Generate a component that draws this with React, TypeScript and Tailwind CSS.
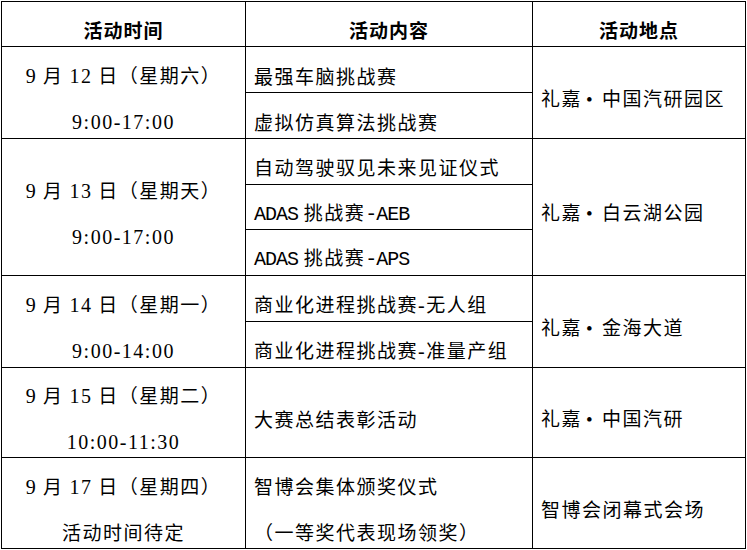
import React from "react";

function Latin({ p }: { p: string }) {
  if (/^[0-9:\-]+$/.test(p)) {
    return (
      <span className="font-['Liberation_Serif'] text-[20px] tracking-[1.5px]">{p}</span>
    );
  }
  return <span className="font-['Liberation_Mono'] text-[20px] tracking-[-1px]">{p}</span>;
}

function Txt({ s }: { s: string }) {
  const parts = s.split(/([!-~]+)/);
  return (
    <>
      {parts.map((p, i) => {
        if (i % 2 === 1) {
          return <Latin key={i} p={p} />;
        }
        const segs = p.split("•");
        return (
          <React.Fragment key={i}>
            {segs.map((seg, j) => (
              <React.Fragment key={j}>
                {j > 0 && (
                  <span className="inline-block w-[20px] pl-[4px] text-left font-['Liberation_Serif'] text-[19px] tracking-[0px]">
                    •
                  </span>
                )}
                {seg}
              </React.Fragment>
            ))}
          </React.Fragment>
        );
      })}
    </>
  );
}

type Row = {
  h: string;
  date: string;
  time: string;
  items: string[];
  multiline?: boolean;
  place: string;
};

const rows: Row[] = [
  {
    h: "h-[92px]",
    date: "9 月 12 日（星期六）",
    time: "9:00-17:00",
    items: ["最强车脑挑战赛", "虚拟仿真算法挑战赛"],
    place: "礼嘉•中国汽研园区",
  },
  {
    h: "h-[137px]",
    date: "9 月 13 日（星期天）",
    time: "9:00-17:00",
    items: ["自动驾驶驭见未来见证仪式", "ADAS 挑战赛-AEB", "ADAS 挑战赛-APS"],
    place: "礼嘉•白云湖公园",
  },
  {
    h: "h-[92px]",
    date: "9 月 14 日（星期一）",
    time: "9:00-14:00",
    items: ["商业化进程挑战赛-无人组", "商业化进程挑战赛-准量产组"],
    place: "礼嘉•金海大道",
  },
  {
    h: "h-[90px]",
    date: "9 月 15 日（星期二）",
    time: "10:00-11:30",
    items: ["大赛总结表彰活动"],
    place: "礼嘉•中国汽研",
  },
  {
    h: "h-[91px]",
    date: "9 月 17 日（星期四）",
    time: "活动时间待定",
    items: ["智博会集体颁奖仪式", "（一等奖代表现场领奖）"],
    multiline: true,
    place: "智博会闭幕式会场",
  },
];

export default function App() {
  return (
    <div className="w-[747px] h-[550px] overflow-hidden bg-white pl-[1px] pt-[1px] font-['Noto_Sans_CJK_SC',sans-serif] text-black">
      <div className="w-[745px] border-l border-t border-black flex flex-col">
        <div className="grid grid-cols-[244px_287px_213px] h-[45px] shrink-0">
          {["活动时间", "活动内容", "活动地点"].map((t) => (
            <div
              key={t}
              className="border-r border-b border-black flex items-center justify-center pt-3 font-bold text-[19px] tracking-[1px] leading-[24px]"
            >
              {t}
            </div>
          ))}
        </div>
        {rows.map((r, idx) => (
          <div
            key={idx}
            className={`grid grid-cols-[244px_287px_213px] grid-rows-[100%] shrink-0 overflow-hidden ${r.h}`}
          >
            <div className="border-r border-b border-black flex flex-col items-center justify-center gap-[21px] pt-3 text-[19px] tracking-[1.5px] leading-[24px]">
              <div>
                <Txt s={r.date} />
              </div>
              <div>
                <Txt s={r.time} />
              </div>
            </div>
            <div className="border-r border-b border-black flex flex-col min-h-0">
              {r.multiline ? (
                <div className="flex-1 flex flex-col justify-center gap-[22px] pl-2 pt-3 text-[19px] tracking-[1.5px] leading-[24px]">
                  {r.items.map((it) => (
                    <div key={it}>
                      <Txt s={it} />
                    </div>
                  ))}
                </div>
              ) : (
                r.items.map((it, k) => (
                  <div
                    key={it}
                    className={
                      k < r.items.length - 1
                        ? "flex-1 min-h-0 border-b border-black flex items-center pl-2 pt-3 text-[19px] tracking-[1.5px] leading-[24px]"
                        : "flex-1 min-h-0 flex items-center pl-2 pt-3 text-[19px] tracking-[1.5px] leading-[24px]"
                    }
                  >
                    <span>
                      <Txt s={it} />
                    </span>
                  </div>
                ))
              )}
            </div>
            <div className="border-r border-b border-black flex items-center pl-2 pt-3 text-[19px] tracking-[1.5px] leading-[24px]">
              <span>
                <Txt s={r.place} />
              </span>
            </div>
          </div>
        ))}
      </div>
    </div>
  );
}
